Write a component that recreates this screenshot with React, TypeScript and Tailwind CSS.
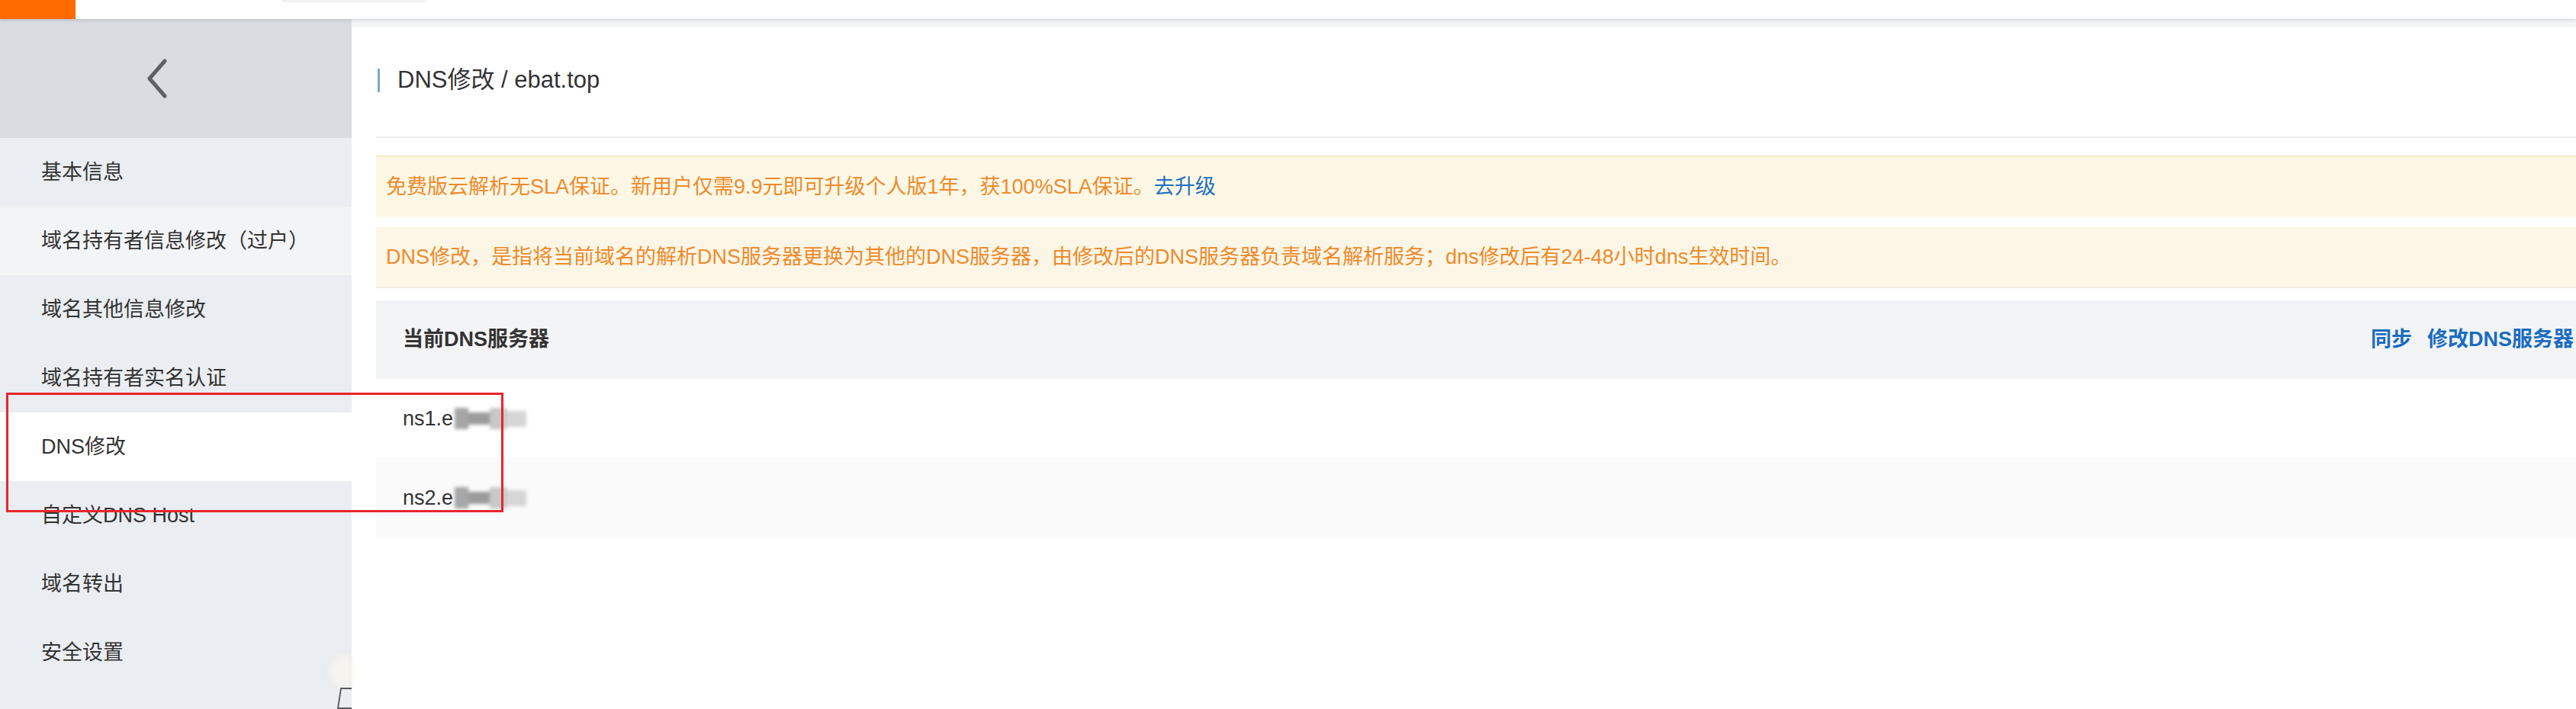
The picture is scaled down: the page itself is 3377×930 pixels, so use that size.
const menu = [
  "基本信息",
  "域名持有者信息修改（过户）",
  "域名其他信息修改",
  "域名持有者实名认证",
  "DNS修改",
  "自定义DNS Host",
  "域名转出",
  "安全设置",
]

function Blurred() {
  return (
    <span className="ml-[2px] inline-flex h-[28px] w-[94px] items-center blur-[2px]">
      <span className="h-full w-[18px] bg-[#a6a6a6]" />
      <span className="h-[55%] w-[28px] bg-[#9c9c9c]" />
      <span className="h-full w-[22px] bg-[#c8c8c8]" />
      <span className="h-[75%] w-[26px] bg-[#d6d6d6]" />
    </span>
  )
}

export default function App() {
  return (
    <div
      className="relative h-[930px] w-[3377px] overflow-hidden bg-white text-[27px] text-[#333]"
      style={{ fontFamily: '"Liberation Sans", "Noto Sans CJK SC", sans-serif' }}
    >
      {/* Top bar */}
      <div className="relative z-10 flex h-[25px] bg-white shadow-[0_2px_4px_rgba(0,0,0,0.12)]">
        <div className="w-[99px] bg-[#ff6a00]" />
        <div className="ml-[271px] h-[3px] w-[188px] bg-[#f1f1f1]" />
      </div>

      <div className="flex h-[905px]">
        {/* Sidebar */}
        <aside className="relative flex w-[461px] shrink-0 flex-col bg-[#eaedf1]">
          <div className="flex h-[156px] items-center justify-center bg-[#d9dde2] pr-[50px]">
            <svg width="28" height="52" viewBox="0 0 28 52" fill="none">
              <path d="M24 3 L4 26 L24 49" stroke="#5c6166" strokeWidth="5" strokeLinecap="round" strokeLinejoin="round" />
            </svg>
          </div>
          {menu.map((item, i) => (
            <div
              key={item}
              className={
                "flex h-[90px] items-center pl-[54px] " +
                (i === 4 ? "bg-white" : i === 1 ? "bg-[#f3f4f6]" : "")
              }
            >
              {item}
            </div>
          ))}

          {/* Partial floating widget at sidebar edge */}
          <div className="absolute left-[432px] top-[835px] h-[42px] w-[29px] rounded-l-full bg-[#f6f4ee] blur-[4px]" />
          <svg className="absolute left-[440px] top-[877px]" width="21" height="28" viewBox="0 0 21 28" fill="none">
            <path d="M21 1 H7 L3 27 H21" stroke="#555a60" strokeWidth="1.8" />
          </svg>
        </aside>

        {/* Main */}
        <main className="flex-1 overflow-hidden bg-white">
          <div className="h-[11px] bg-[#f4f5f6]" />
          <div className="w-[2916px] pl-[32px]">
            <div className="flex h-[145px] items-center border-b-2 border-[#ececec] pb-[4px]">
              <div className="ml-[2px] h-[31px] w-[3px] bg-[#7ba7d4]" />
              <h1 className="ml-[23px] text-[31px] text-[#333]">DNS修改 / ebat.top</h1>
            </div>

            <div className="mt-[23px] flex h-[81px] items-center border-t-2 border-[#f3edc6] bg-[#fdf8e6] pl-[13px] text-[#ef8a2c]">
              免费版云解析无SLA保证。新用户仅需9.9元即可升级个人版1年，获100%SLA保证。
              <span className="text-[#1f6fc1]">去升级</span>
            </div>

            <div className="mt-[13px] flex h-[80px] items-center border-b-2 border-[#f1ece0] bg-[#fcf6e6] pl-[13px] text-[#ef8a2c]">
              DNS修改，是指将当前域名的解析DNS服务器更换为其他的DNS服务器，由修改后的DNS服务器负责域名解析服务；dns修改后有24-48小时dns生效时间。
            </div>

            <div className="mt-[16px] bg-[#fafafa]">
              <div className="flex h-[103px] items-center justify-between bg-[#f3f4f6] pl-[35px] pr-[3px]">
                <span className="font-bold text-[#333]">当前DNS服务器</span>
                <div className="flex gap-[20px] font-bold text-[#1a6cc0]">
                  <span>同步</span>
                  <span>修改DNS服务器</span>
                </div>
              </div>
              <div className="flex h-[104px] items-center bg-white pl-[35px]">
                ns1.e<Blurred />
              </div>
              <div className="flex h-[104px] items-center pl-[35px]">
                ns2.e<Blurred />
              </div>
            </div>
          </div>
        </main>
      </div>

      {/* Annotation rectangle */}
      <div className="pointer-events-none absolute left-[8px] top-[515px] h-[157px] w-[652px] border-[3px] border-[#e8262c]" />
    </div>
  )
}
